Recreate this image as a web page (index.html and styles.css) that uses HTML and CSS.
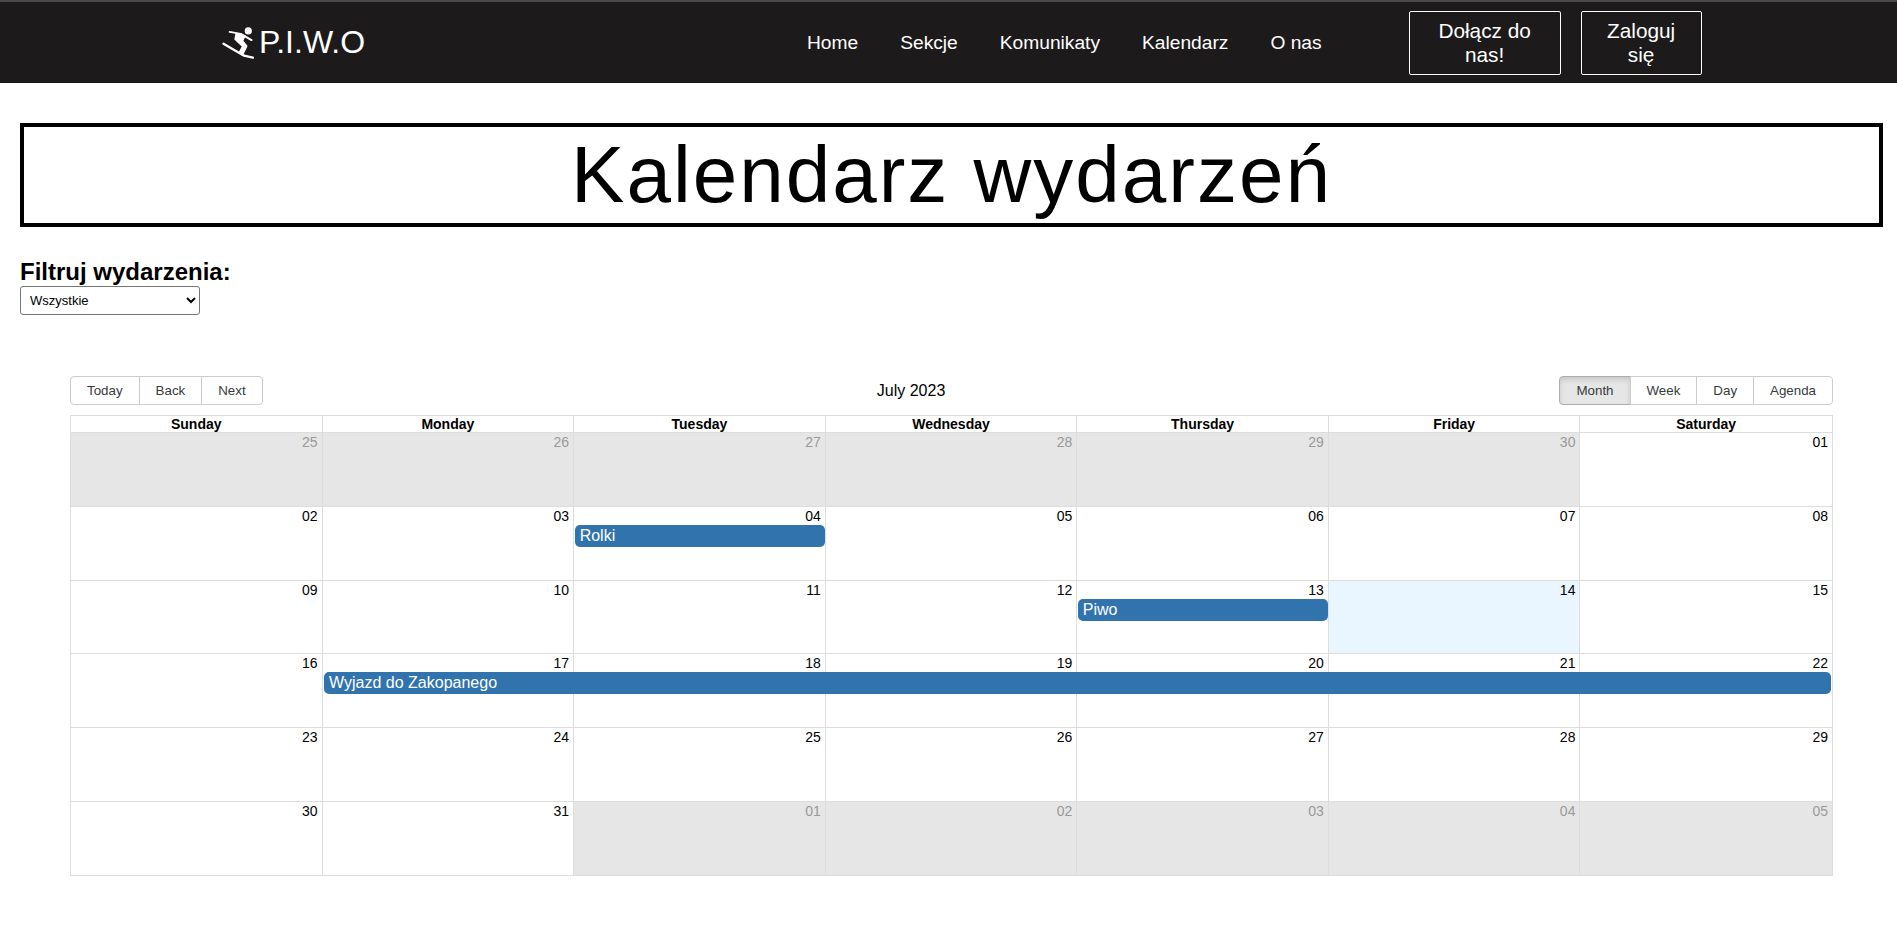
FILE: index.html
```html
<!DOCTYPE html>
<html lang="pl">
<head>
  <meta charset="UTF-8">
  <title>Kalendarz wydarzeń</title>
  <link rel="stylesheet" href="styles.css">
</head>
<body>

  <nav class="navbar">
    <a class="logo" href="#">
      <svg class="logo-icon" viewBox="65 80 97 98" aria-hidden="true">
        <circle cx="145" cy="92" r="11" fill="#fff"/>
        <polyline points="88,95 122,101 155,120" fill="none" stroke="#fff" stroke-width="6" stroke-linecap="round" stroke-linejoin="round"/>
        <polygon points="106,98 138,106 130,122 143,138 130,165 115,158 125,140 102,118" fill="#fff"/>
        <polyline points="69,131 132,168 159,174" fill="none" stroke="#fff" stroke-width="7" stroke-linecap="round" stroke-linejoin="round"/>
      </svg>
      <span>P.I.W.O</span>
    </a>
    <ul class="nav-links">
      <li><a href="#">Home</a></li>
      <li><a href="#">Sekcje</a></li>
      <li><a href="#">Komunikaty</a></li>
      <li><a href="#">Kalendarz</a></li>
      <li><a href="#">O nas</a></li>
    </ul>
    <div class="nav-buttons">
      <a class="nav-btn join" href="#">Dołącz do nas!</a>
      <a class="nav-btn login" href="#">Zaloguj się</a>
    </div>
  </nav>

  <main class="content">
    <h1 class="page-title">Kalendarz wydarzeń</h1>

    <div class="filter">
      <label for="eventFilter">Filtruj wydarzenia:</label>
      <select id="eventFilter">
        <option>Wszystkie</option>
      </select>
    </div>

    <section class="calendar">
      <div class="toolbar">
        <div class="btn-group">
          <button>Today</button>
          <button>Back</button>
          <button>Next</button>
        </div>
        <span class="toolbar-label">July 2023</span>
        <div class="btn-group">
          <button class="active">Month</button>
          <button>Week</button>
          <button>Day</button>
          <button>Agenda</button>
        </div>
      </div>

      <div class="month">
        <div class="month-header">
          <div>Sunday</div>
          <div>Monday</div>
          <div>Tuesday</div>
          <div>Wednesday</div>
          <div>Thursday</div>
          <div>Friday</div>
          <div>Saturday</div>
        </div>

        <div class="week">
          <div class="day off">25</div>
          <div class="day off">26</div>
          <div class="day off">27</div>
          <div class="day off">28</div>
          <div class="day off">29</div>
          <div class="day off">30</div>
          <div class="day">01</div>
        </div>

        <div class="week">
          <div class="day">02</div>
          <div class="day">03</div>
          <div class="day">04</div>
          <div class="day">05</div>
          <div class="day">06</div>
          <div class="day">07</div>
          <div class="day">08</div>
          <div class="event col-3 span-1">Rolki</div>
        </div>

        <div class="week">
          <div class="day">09</div>
          <div class="day">10</div>
          <div class="day">11</div>
          <div class="day">12</div>
          <div class="day">13</div>
          <div class="day today">14</div>
          <div class="day">15</div>
          <div class="event col-5 span-1">Piwo</div>
        </div>

        <div class="week">
          <div class="day">16</div>
          <div class="day">17</div>
          <div class="day">18</div>
          <div class="day">19</div>
          <div class="day">20</div>
          <div class="day">21</div>
          <div class="day">22</div>
          <div class="event col-2 span-6">Wyjazd do Zakopanego</div>
        </div>

        <div class="week">
          <div class="day">23</div>
          <div class="day">24</div>
          <div class="day">25</div>
          <div class="day">26</div>
          <div class="day">27</div>
          <div class="day">28</div>
          <div class="day">29</div>
        </div>

        <div class="week">
          <div class="day">30</div>
          <div class="day">31</div>
          <div class="day off">01</div>
          <div class="day off">02</div>
          <div class="day off">03</div>
          <div class="day off">04</div>
          <div class="day off">05</div>
        </div>
      </div>
    </section>
  </main>

</body>
</html>
```

FILE: styles.css
```css
* {
  box-sizing: border-box;
}

body {
  font-family: "Liberation Sans", Arial, sans-serif;
  background-color: #fff;
  color: #000;
  margin: 0;
}

.navbar {
  display: flex;
  align-items: center;
  height: 83px;
  padding-left: 222px;
  background-color: #1c1a1a;
  border-top: 2px solid #4a4a4a;
}

.logo {
  display: flex;
  align-items: center;
  gap: 5px;
  width: 558px;
  color: #fff;
  font-size: 32px;
  text-decoration: none;
}

.logo-icon {
  width: 32px;
  height: 32px;
}

.nav-links {
  display: flex;
  gap: 42px;
  list-style: none;
  margin: 0;
  padding: 0 0 0 27px;
}

.nav-links a {
  color: #fff;
  font-size: 19.2px;
  text-decoration: none;
}

.nav-buttons {
  display: flex;
  gap: 20px;
  margin-left: 87px;
}

.nav-btn {
  display: block;
  height: 64px;
  padding: 7px 24px;
  color: #fff;
  border: 1px solid #fff;
  border-radius: 2px;
  font-size: 20.8px;
  line-height: 24px;
  text-align: center;
  text-decoration: none;
}

.join {
  width: 152px;
}

.login {
  width: 121px;
}

.content {
  padding: 40px 14px 0 20px;
}

.page-title {
  margin: 0;
  height: 104px;
  border: 4px solid #000;
  font-size: 80px;
  font-weight: 400;
  letter-spacing: 2px;
  line-height: 95px;
  text-align: center;
}

.filter {
  margin-top: 31px;
}

.filter label {
  display: block;
  font-size: 24px;
  font-weight: bold;
  line-height: 28px;
}

.filter select {
  display: block;
  width: 180px;
  height: 29px;
  padding: 0 5px;
  font-family: inherit;
  font-size: 13px;
  background-color: #fff;
  border: 1px solid #767676;
  border-radius: 3px;
}

.calendar {
  margin: 61px 50px 0;
  font-size: 14px;
}

.toolbar {
  display: flex;
  align-items: center;
  justify-content: space-between;
  height: 29px;
  margin-bottom: 10px;
}

.toolbar-label {
  font-size: 16px;
}

.btn-group {
  display: flex;
}

.btn-group button {
  height: 29px;
  padding: 0 16px;
  margin-left: -1px;
  font-family: inherit;
  font-size: 13.33px;
  color: #373a3c;
  background-color: #fff;
  border: 1px solid #ccc;
}

.btn-group button:first-child {
  margin-left: 0;
  border-radius: 4px 0 0 4px;
}

.btn-group button:last-child {
  border-radius: 0 4px 4px 0;
}

.btn-group button.active {
  background-color: #e6e6e6;
  border-color: #adadad;
  box-shadow: inset 0 3px 5px rgba(0, 0, 0, 0.125);
}

.month {
  display: flex;
  flex-direction: column;
  height: 461px;
  border: 1px solid #ddd;
}

.month-header {
  display: grid;
  grid-template-columns: repeat(7, 1fr);
  height: 16px;
  font-size: 14px;
  font-weight: bold;
  line-height: 17px;
  text-align: center;
}

.month-header div {
  border-right: 1px solid #ddd;
}

.month-header div:last-child {
  border-right: none;
}

.week {
  position: relative;
  flex: 1;
  display: grid;
  grid-template-columns: repeat(7, 1fr);
  border-top: 1px solid #ddd;
}

.day {
  padding: 1px 4px 0 0;
  font-size: 14px;
  line-height: 16px;
  text-align: right;
  border-right: 1px solid #ddd;
}

.day:nth-child(7) {
  border-right: none;
}

.day.off {
  color: #999;
  background-color: #e6e6e6;
}

.day.today {
  background-color: #eaf6ff;
}

.event {
  position: absolute;
  top: 18px;
  height: 22px;
  padding: 0 5px;
  color: #fff;
  font-size: 16px;
  line-height: 21px;
  background-color: #3174ad;
  border-radius: 5px;
}

.col-2 {
  left: calc(100% / 7 + 1.5px);
}

.col-3 {
  left: calc(200% / 7 + 0.5px);
}

.col-5 {
  left: calc(400% / 7 + 0.5px);
}

.span-1 {
  width: calc(100% / 7 - 1.5px);
}

.span-6 {
  width: calc(600% / 7 - 2.5px);
}
```
